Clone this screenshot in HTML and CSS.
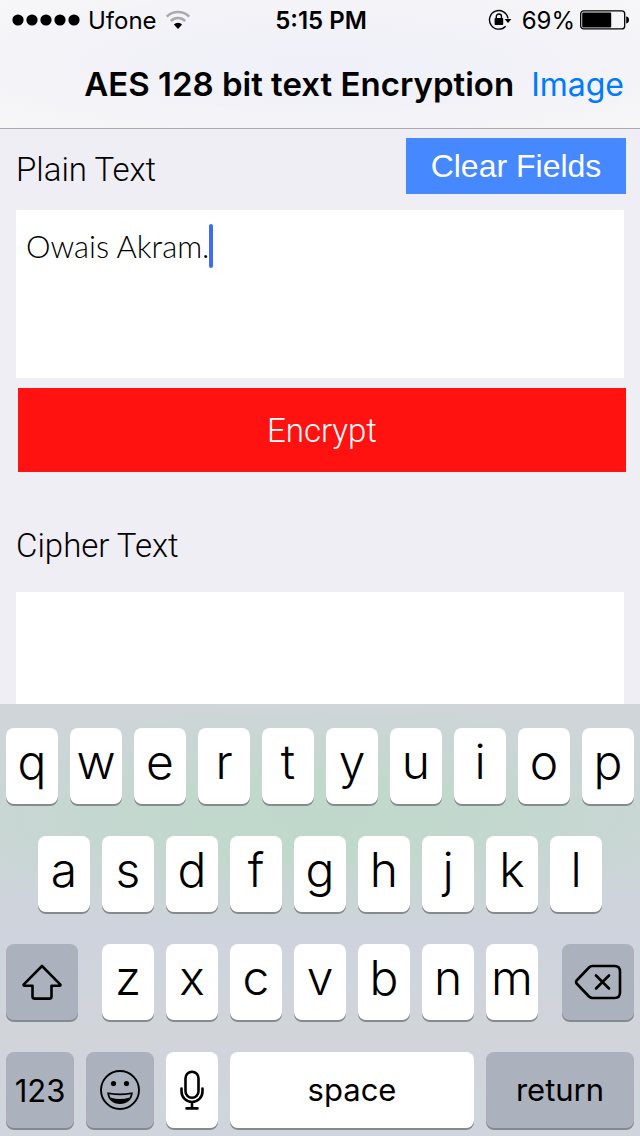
FILE: index.html
```html
<!DOCTYPE html>
<html lang="en">
<head>
<meta charset="utf-8">
<meta name="viewport" content="width=device-width, initial-scale=1">
<title>AES 128 bit text Encryption</title>
<link rel="stylesheet" href="styles.css">
</head>
<body>
<div class="app">
  <header class="top">
    <div class="status">
      <div class="status-left">
        <svg class="signal" width="68" height="12" viewBox="0 0 68 12" aria-hidden="true">
          <circle cx="6" cy="6" r="5.6"/><circle cx="20" cy="6" r="5.6"/><circle cx="34" cy="6" r="5.6"/><circle cx="48" cy="6" r="5.6"/><circle cx="62" cy="6" r="5.6"/>
        </svg>
        <span>Ufone</span>
        <svg class="wifi" width="26" height="20" viewBox="0 0 26 20" aria-hidden="true">
          <path d="M1.8 6.600A16 16 0 0 1 24.200 6.600" fill="none" stroke="#aaaaae" stroke-width="2.600"/>
          <path d="M5.800 11A10.200 10.200 0 0 1 20.200 11" fill="none" stroke="#aaaaae" stroke-width="2.600"/>
          <path d="M13 19L8.900 14.400A5.800 5.800 0 0 1 17.100 14.400Z"/>
        </svg>
      </div>
      <span class="clock">5:15 PM</span>
      <div class="status-right">
        <svg class="lock" width="24" height="22" viewBox="0 0 24 22" aria-hidden="true">
          <path d="M20 9.500A9.300 9.300 0 1 0 17.600 17.200" fill="none" stroke="#000" stroke-width="1.400"/>
          <path d="M16.600 10H23.400L20 14Z"/>
          <rect x="6.600" y="9" width="8.600" height="7" rx="0.800"/>
          <path d="M8.300 9.500V7.600A2.600 2.600 0 0 1 13.500 7.600V9.500" fill="none" stroke="#000" stroke-width="1.400"/>
        </svg>
        <span>69%</span>
        <svg class="battery" width="50" height="20" viewBox="0 0 50 20" aria-hidden="true">
          <rect x="0.700" y="0.900" width="44" height="18" rx="3" fill="none" stroke="#000" stroke-width="1.300"/>
          <rect x="2.200" y="2.400" width="29" height="15" rx="1"/>
          <path d="M46.200 6.600C50 6.600 50 13.400 46.200 13.400Z"/>
        </svg>
      </div>
    </div>
    <nav class="nav">
      <h1 class="title">AES 128 bit text Encryption</h1>
      <a class="nav-link" href="#image">Image</a>
    </nav>
  </header>

  <main class="form">
    <div class="form-head">
      <label class="label" for="plain">Plain Text</label>
      <button class="clear" type="button">Clear Fields</button>
    </div>
    <div class="field">
      <textarea class="text plain" id="plain" spellcheck="false">Owais Akram.</textarea>
      <span class="caret"></span>
    </div>
    <button class="encrypt" type="button">Encrypt</button>
    <label class="label cipher-label" for="cipher">Cipher Text</label>
    <textarea class="text cipher" id="cipher"></textarea>
  </main>

  <section class="keyboard" aria-label="Keyboard">
    <div class="row">
      <button class="key">q</button><button class="key">w</button><button class="key">e</button><button class="key">r</button><button class="key">t</button><button class="key">y</button><button class="key">u</button><button class="key">i</button><button class="key">o</button><button class="key">p</button>
    </div>
    <div class="row inset">
      <button class="key">a</button><button class="key">s</button><button class="key">d</button><button class="key">f</button><button class="key">g</button><button class="key">h</button><button class="key">j</button><button class="key">k</button><button class="key">l</button>
    </div>
    <div class="row wide-gap">
      <button class="key dark side" aria-label="Shift">
        <svg width="40" height="36" viewBox="0 0 40 36" fill="none" stroke="#000" stroke-width="2.600" stroke-linejoin="round" aria-hidden="true">
          <path d="M20 2L38.400 20.600Q38.600 21.600 37.600 21.700H29.500V32.500Q29.500 34.600 27.400 34.600H12.600Q10.500 34.600 10.500 32.500V21.700H2.400Q1.400 21.600 1.600 20.600Z"/>
        </svg>
      </button>
      <div class="group">
        <button class="key">z</button><button class="key">x</button><button class="key">c</button><button class="key">v</button><button class="key">b</button><button class="key">n</button><button class="key">m</button>
      </div>
      <button class="key dark side" aria-label="Delete">
        <svg width="48" height="36" viewBox="0 0 48 36" fill="none" stroke="#000" stroke-width="2.600" stroke-linejoin="round" stroke-linecap="round" aria-hidden="true">
          <path d="M18.500 2H40.500Q46 2 46 7.500V28.500Q46 34 40.500 34H18.500Q16.500 34 15 32.500L2.600 19.500Q1.500 18 2.600 16.500L15 3.500Q16.500 2 18.500 2Z"/>
          <path d="M22 11.500L35 24.500M35 11.500L22 24.500"/>
        </svg>
      </button>
    </div>
    <div class="row">
      <button class="key dark mode">123</button>
      <button class="key dark emoji" aria-label="Emoji">
        <svg width="40" height="40" viewBox="0 0 40 40" aria-hidden="true">
          <circle cx="20" cy="20" r="19" fill="none" stroke="#000" stroke-width="1.900"/>
          <circle cx="13.500" cy="13.600" r="2.600"/><circle cx="26.500" cy="13.600" r="2.600"/>
          <path d="M7.200 22.200Q20 25 32.800 22.200C32.400 30 26.800 34 20 34S7.600 30 7.200 22.200Z"/>
          <path d="M9.300 24.200Q20 26.400 30.700 24.200Q30.400 26 29.600 27.400Q20 30.400 10.400 27.400Q9.600 26 9.300 24.200Z" fill="#abb2bd"/>
        </svg>
      </button>
      <button class="key" aria-label="Dictate">
        <svg width="24" height="40" viewBox="0 0 24 40" fill="none" stroke="#000" stroke-width="2.600" stroke-linecap="round" aria-hidden="true">
          <rect x="5.500" y="1.800" width="13" height="26" rx="6.500"/>
          <path d="M1.500 18.500V21.500A10.500 10.500 0 0 0 22.500 21.500V18.500M12 32V38M6.500 38.400H17.500"/>
        </svg>
      </button>
      <button class="key space">space</button>
      <button class="key dark return">return</button>
    </div>
  </section>
</div>
</body>
</html>
```

FILE: styles.css
```css
* {
  box-sizing: border-box;
}

body {
  margin: 0;
  background: #efeef4;
  color: #000;
  font-family: Inter, "Liberation Sans", sans-serif;
}

button {
  border: 0;
  padding: 0;
  color: inherit;
  font: inherit;
}

svg {
  display: block;
  flex: none;
}

.app {
  display: flex;
  flex-direction: column;
  min-height: 100vh;
}

/* Status and navigation bars */
.top {
  background: radial-gradient(ellipse at center, #f0f0f9 0%, #f2f2f8 50%, #f7f7f8 100%);
  border-bottom: 1px solid #a9a9ae;
}

.status {
  display: grid;
  grid-template-columns: 1fr auto 1fr;
  align-items: center;
  height: 40px;
  padding: 0 10px 0 12px;
  font-size: 24px;
}

.status-left,
.status-right {
  display: flex;
  align-items: center;
}

.status-left {
  gap: 8px;
}

.status-right {
  justify-content: flex-end;
}

.clock {
  font-weight: 600;
}

.lock {
  margin-right: 10px;
}

.battery {
  margin-left: 5px;
}

.nav {
  display: flex;
  align-items: center;
  justify-content: flex-end;
  gap: 17px;
  height: 88px;
  padding: 0 16px;
}

.title {
  margin: 0;
  font-size: 33px;
  font-weight: 600;
}

.nav-link {
  color: #007aff;
  font-size: 32px;
  text-decoration: none;
}

/* Form */
.form {
  display: flex;
  flex: 1;
  flex-direction: column;
  padding: 9px 16px 0;
}

.form-head {
  display: flex;
  align-items: center;
  justify-content: space-between;
  margin-right: -2px;
}

.label {
  font-family: Roboto, "Liberation Sans", sans-serif;
  font-size: 33px;
  font-weight: 300;
  line-height: 40px;
}

.form-head .label {
  padding-top: 8px;
}

.clear {
  width: 220px;
  height: 56px;
  background: #4688ff;
  color: #fff;
  font-family: "Liberation Sans", sans-serif;
  font-size: 32px;
}

.field {
  position: relative;
  margin-top: 16px;
}

.text {
  display: block;
  width: 100%;
  border: 0;
  padding: 16px 10px;
  background: #fff;
  color: #000;
  font-family: Lato, sans-serif;
  font-size: 31px;
  font-weight: 300;
  line-height: 40px;
  outline: 0;
  resize: none;
}

.plain {
  height: 168px;
}

.caret {
  position: absolute;
  top: 14px;
  left: 193px;
  width: 4px;
  height: 44px;
  border-radius: 2px;
  background: #426bf2;
}

.encrypt {
  height: 84px;
  margin: 10px -2px 0 2px;
  background: #ff120f;
  color: #fff;
  font-family: Roboto, "Liberation Sans", sans-serif;
  font-size: 33px;
  font-weight: 300;
}

.cipher-label {
  margin-top: 54px;
}

.cipher {
  flex: 1;
  min-height: 112px;
  margin-top: 26px;
}

/* Keyboard */
.keyboard {
  display: flex;
  flex-direction: column;
  gap: 32px;
  padding: 24px 6px 8px;
  background:
    radial-gradient(ellipse 70% 27% at 50% 26%, #c0d8cb 0%, #c2d8ce 35%, rgba(194, 216, 206, 0) 100%),
    linear-gradient(#d0d5d9 0%, #ced5d9 30%, #cfd3dd 54%, #d1d5da 75%, #d0d4dc 100%);
}

.row,
.group {
  display: flex;
  gap: 12px;
}

.wide-gap {
  gap: 24px;
}

.group {
  flex: 436 1 0;
}

.inset::before,
.inset::after {
  content: "";
  flex: 20 1 0;
}

.key {
  display: flex;
  flex: 52 1 0;
  align-items: center;
  justify-content: center;
  min-width: 0;
  height: 76px;
  border-radius: 8px;
  padding-bottom: 10px;
  background: #fff;
  box-shadow: 0 2px 0 #868a8d;
  font-size: 48px;
  font-weight: 350;
}

.key:has(svg) {
  padding-bottom: 0;
}

.dark {
  background: #abb2be;
}

.side {
  flex-grow: 72;
}

.mode,
.emoji {
  flex-grow: 68;
}

.mode,
.space,
.return {
  padding-bottom: 0;
  font-size: 31px;
  font-weight: 400;
}

.space,
.return {
  padding-bottom: 2px;
}

.space {
  flex-grow: 244;
}

.return {
  flex-grow: 148;
}
```
